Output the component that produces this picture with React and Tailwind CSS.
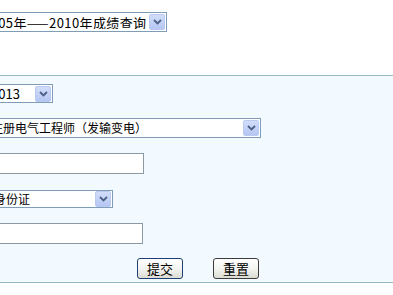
import React from "react";

const font = { fontFamily: '"Noto Sans CJK SC", "Liberation Sans", sans-serif' };

function Arrow() {
  return (
    <div className="flex h-[16px] w-[16px] shrink-0 items-center justify-center rounded-[2px] border border-[#b9c9ef] bg-gradient-to-b from-[#d3ddfa] to-[#b4c6f2]">
      <svg width="9" height="6" viewBox="0 0 9 6">
        <path d="M1 1 L4.5 4.5 L8 1" fill="none" stroke="#4d6185" strokeWidth="1.8" />
      </svg>
    </div>
  );
}

function Sel({ text, className, size = "text-[12px]" }) {
  return (
    <div className={`flex items-center border border-[#7f9db9] bg-white pr-[1px] ${className}`}>
      <div className={`flex-1 overflow-hidden whitespace-nowrap pl-[3px] leading-none text-black ${size}`}>{text}</div>
      <Arrow />
    </div>
  );
}

function Inp({ className }) {
  return <div className={`border border-[#8c9aa6] bg-white ${className}`} />;
}

function Btn({ text, className }) {
  return (
    <div className={`flex h-[21px] w-[46px] items-center justify-center rounded-[3px] border bg-gradient-to-b from-white via-[#f4f4f0] to-[#dcdcd4] text-[13px] leading-none text-black ${className}`}>
      {text}
    </div>
  );
}

export default function App() {
  return (
    <div className="h-[295px] w-[393px] overflow-hidden bg-white" style={font}>
      <div className="h-[75px] pt-[12px]">
        <Sel text="2005年——2010年成绩查询" size="text-[13px] tracking-[0.4px]" className="-ml-[21px] h-[20px] w-[188px]" />
      </div>
      <div className="h-[208px] border-t border-b border-[#93bac2] bg-[#f3faff]">
        <div className="flex flex-col items-start">
          <Sel text="2013" size="text-[13px]" className="mt-[8px] -ml-[13px] h-[19px] w-[66px]" />
          <Sel text="注册电气工程师（发输变电）" className="mt-[15px] -ml-[13px] h-[20px] w-[274px]" />
          <Inp className="mt-[15px] -ml-[8px] h-[21px] w-[152px]" />
          <Sel text="身份证" className="mt-[16px] -ml-[10px] h-[18px] w-[123px]" />
          <Inp className="mt-[15px] -ml-[8px] h-[21px] w-[151px]" />
          <div className="mt-[14px] flex w-full">
            <Btn text="提交" className="ml-[137px] border-[#1c3f75]" />
            <Btn text="重置" className="ml-[30px] border-[#3b3b3b]" />
          </div>
        </div>
      </div>
    </div>
  );
}
